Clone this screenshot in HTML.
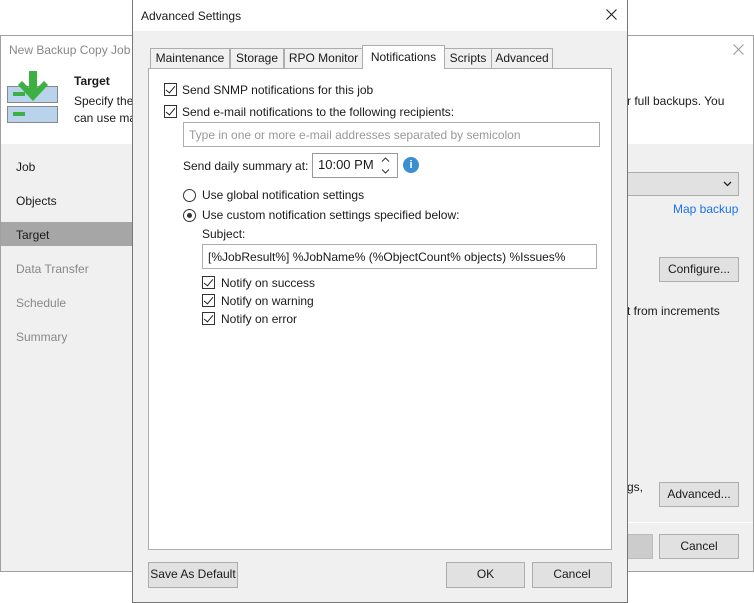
<!DOCTYPE html>
<html><head><style>
*{box-sizing:border-box;margin:0;padding:0}
body{width:754px;height:603px;position:relative;background:#fff;font-family:"Liberation Sans",sans-serif;font-size:12px;color:#1a1a1a;overflow:hidden}
.a{position:absolute}
.t{position:absolute;white-space:nowrap;line-height:14px}
.btn{position:absolute;background:#e1e1e1;border:1px solid #adadad;text-align:center;line-height:23px;white-space:nowrap}
.cb{position:absolute;width:13px;height:13px;border:1px solid #333;background:#fff}
.cb::after{content:"";position:absolute;left:3px;top:0px;width:4px;height:8px;border:solid #222;border-width:0 1.5px 1.5px 0;transform:rotate(40deg)}
.rb{position:absolute;width:13px;height:13px;border:1px solid #333;border-radius:50%;background:#fff}
.tab{position:absolute;top:48px;height:21px;border:1px solid #adadad;background:#f0f0f0;text-align:center;line-height:19px;white-space:nowrap}
</style></head><body>
<div class="a" style="left:0;top:35px;width:754px;height:537px;border:1px solid #a0a0a0;background:#f0f0f0"></div>
<div class="a" style="left:1px;top:36px;width:752px;height:108px;background:#fff"></div>
<div class="t" style="left:9px;top:43px;color:#888">New Backup Copy Job</div>
<svg class="a" style="left:733px;top:44px" width="11" height="11"><path d="M0.5 0.5L10.5 10.5M10.5 0.5L0.5 10.5" stroke="#999" stroke-width="1"/></svg>
<div class="a" style="left:7px;top:86px;width:51px;height:17px;background:#b9d3ec;border:1px solid #888"></div>
<div class="a" style="left:7px;top:106px;width:51px;height:17px;background:#b9d3ec;border:1px solid #888"></div>
<div class="a" style="left:13px;top:92px;width:12px;height:4px;background:#3cb043"></div>
<div class="a" style="left:13px;top:112px;width:12px;height:4px;background:#3cb043"></div>
<svg class="a" style="left:18px;top:71px" width="30" height="32"><path d="M11 0h8v17l7-7 4 4L15 30 0 14l4-4 7 7z" fill="#3cb043"/></svg>
<div class="t" style="left:74px;top:74px;font-weight:bold">Target</div>
<div class="t" style="left:74px;top:94px">Specify the</div>
<div class="t" style="left:74px;top:111px">can use ma</div>
<div class="t" style="left:627px;top:94px">r full backups. You</div>
<div class="t" style="left:16px;top:160px">Job</div>
<div class="t" style="left:16px;top:194px">Objects</div>
<div class="a" style="left:1px;top:222px;width:131px;height:24px;background:#a6a6a6"></div>
<div class="t" style="left:16px;top:228px">Target</div>
<div class="t" style="left:16px;top:262px;color:#888">Data Transfer</div>
<div class="t" style="left:16px;top:296px;color:#888">Schedule</div>
<div class="t" style="left:16px;top:330px;color:#888">Summary</div>
<div class="a" style="left:620px;top:172px;width:119px;height:24px;background:#e1e1e1;border:1px solid #adadad"></div>
<svg class="a" style="left:723px;top:181px" width="9" height="6"><path d="M1 1L4.5 4.5 8 1" stroke="#222" stroke-width="1.3" fill="none"/></svg>
<div class="t" style="left:673px;top:202px;color:#1a73e8">Map backup</div>
<div class="btn" style="left:659px;top:257px;width:80px;height:25px">Configure...</div>
<div class="t" style="left:627px;top:304px">t from increments</div>
<div class="t" style="left:627px;top:480px">gs,</div>
<div class="btn" style="left:659px;top:482px;width:80px;height:25px">Advanced...</div>
<div class="a" style="left:620px;top:522px;width:133px;height:1px;background:#fff"></div>
<div class="a" style="left:620px;top:534px;width:33px;height:25px;background:#ccc;border:1px solid #bbb"></div>
<div class="btn" style="left:659px;top:534px;width:80px;height:25px">Cancel</div>
<div class="a" style="left:132px;top:0;width:496px;height:603px;border:1px solid #777;background:#f0f0f0"></div>
<div class="a" style="left:133px;top:0;width:494px;height:31px;background:#fff"></div>
<div class="t" style="left:141px;top:9px">Advanced Settings</div>
<svg class="a" style="left:606px;top:9px" width="11" height="11"><path d="M0.5 0.5L10.5 10.5M10.5 0.5L0.5 10.5" stroke="#222" stroke-width="1.1"/></svg>
<div class="a" style="left:148px;top:68px;width:464px;height:482px;background:#fff;border:1px solid #adadad"></div>
<div class="tab" style="left:150px;width:80px">Maintenance</div>
<div class="tab" style="left:230px;width:54px">Storage</div>
<div class="tab" style="left:284px;width:79px">RPO Monitor</div>
<div class="tab" style="left:362px;top:45px;height:24px;width:83px;background:#fff;border-bottom:none;line-height:22px">Notifications</div>
<div class="tab" style="left:444px;width:48px">Scripts</div>
<div class="tab" style="left:491px;width:62px">Advanced</div>
<div class="cb" style="left:164px;top:83px"></div>
<div class="t" style="left:182px;top:83px">Send SNMP notifications for this job</div>
<div class="cb" style="left:164px;top:105px"></div>
<div class="t" style="left:182px;top:105px">Send e-mail notifications to the following recipients:</div>
<div class="a" style="left:183px;top:122px;width:417px;height:25px;border:1px solid #adadad;background:#fff"></div>
<div class="t" style="left:189px;top:128px;color:#999">Type in one or more e-mail addresses separated by semicolon</div>
<div class="t" style="left:183px;top:159px">Send daily summary at:</div>
<div class="a" style="left:312px;top:153px;width:86px;height:25px;border:1px solid #999;background:#fff"></div>
<div class="t" style="left:318px;top:158px;font-size:13px">10:00 PM</div>
<svg class="a" style="left:381px;top:157px" width="9" height="17"><path d="M1 4.5L4.5 1 8 4.5M1 12.5L4.5 16 8 12.5" stroke="#333" stroke-width="1" fill="none"/></svg>
<div class="a" style="left:403px;top:157px;width:16px;height:16px;border-radius:50%;background:#3a8fd0;color:#fff;font-weight:bold;font-size:11px;text-align:center;line-height:16px">i</div>
<div class="rb" style="left:183px;top:189px"></div>
<div class="t" style="left:202px;top:188px">Use global notification settings</div>
<div class="rb" style="left:183px;top:209px"><div class="a" style="left:3px;top:3px;width:5px;height:5px;border-radius:50%;background:#333"></div></div>
<div class="t" style="left:202px;top:208px">Use custom notification settings specified below:</div>
<div class="t" style="left:202px;top:227px">Subject:</div>
<div class="a" style="left:202px;top:244px;width:395px;height:25px;border:1px solid #adadad;background:#fff"></div>
<div class="t" style="left:208px;top:250px">[%JobResult%] %JobName% (%ObjectCount% objects) %Issues%</div>
<div class="cb" style="left:202px;top:276px"></div>
<div class="t" style="left:221px;top:276px">Notify on success</div>
<div class="cb" style="left:202px;top:294px"></div>
<div class="t" style="left:221px;top:294px">Notify on warning</div>
<div class="cb" style="left:202px;top:312px"></div>
<div class="t" style="left:221px;top:312px">Notify on error</div>
<div class="btn" style="left:148px;top:562px;width:90px;height:26px">Save As Default</div>
<div class="btn" style="left:446px;top:562px;width:79px;height:26px">OK</div>
<div class="btn" style="left:532px;top:562px;width:80px;height:26px">Cancel</div>
</body></html>
